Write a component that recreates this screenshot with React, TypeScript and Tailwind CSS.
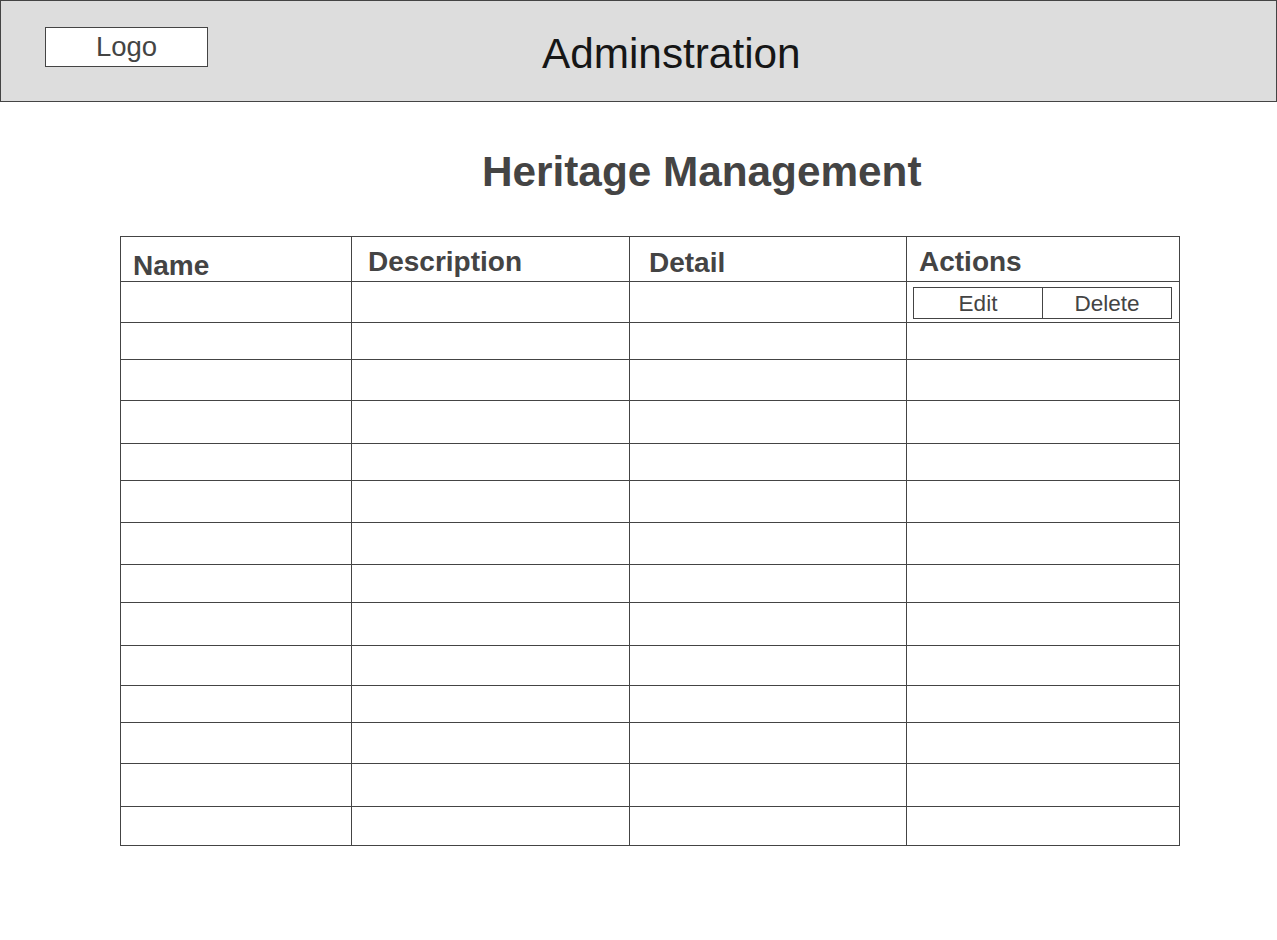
import React from "react";

const rowHeights = [41, 37, 41, 43, 37, 42, 42, 38, 43, 40, 37, 41, 43, 39];

function Cells({ first }: { first?: boolean }) {
  return (
    <>
      <div className="w-[231px] shrink-0 border-r border-[#444]" />
      <div className="w-[278px] shrink-0 border-r border-[#444]" />
      <div className="w-[277px] shrink-0 border-r border-[#444]" />
      <div className="flex-1">
        {first && (
          <div className="ml-[6px] mt-[5px] flex h-[32px] w-[259px] border border-[#444] pt-[2px] text-[22.5px] leading-none text-[#444]">
            <div className="flex w-[128px] items-center justify-center">Edit</div>
            <div className="-mt-[2px] flex flex-1 items-center justify-center border-l border-[#444] pt-[2px]">Delete</div>
          </div>
        )}
      </div>
    </>
  );
}

export default function App() {
  return (
    <div className="min-h-[940px] w-[1277px] bg-white font-['Liberation_Sans',Arial,sans-serif]">
      <header className="flex h-[102px] items-start border border-[#444] bg-[#dddddd]">
        <div className="ml-[44px] mt-[26px] flex h-[40px] w-[163px] items-center justify-center border border-[#444] bg-white text-[27.5px] leading-none text-[#444]">
          Logo
        </div>
        <div className="ml-[334px] mt-[29px] text-[42.3px] leading-[48px] text-[#161616]">Adminstration</div>
      </header>

      <h1 className="ml-[482px] mt-[46px] h-[48px] text-[42.3px] font-bold leading-[48px] text-[#444]">
        Heritage Management
      </h1>

      <div className="ml-[120px] mt-[40px] w-[1060px] border border-[#444]">
        <div className="flex h-[44px] text-[28px] font-bold leading-[28px] text-[#444]">
          <div className="w-[231px] shrink-0 border-r border-[#444] pl-[12px] pt-[15px]">Name</div>
          <div className="w-[278px] shrink-0 border-r border-[#444] pl-[16px] pt-[11px]">Description</div>
          <div className="w-[277px] shrink-0 border-r border-[#444] pl-[19px] pt-[12px]">Detail</div>
          <div className="flex-1 pl-[12px] pt-[11px]">Actions</div>
        </div>
        {rowHeights.map((h, i) => (
          <div key={i} className="flex border-t border-[#444]" style={{ height: h }}>
            <Cells first={i === 0} />
          </div>
        ))}
      </div>
    </div>
  );
}
